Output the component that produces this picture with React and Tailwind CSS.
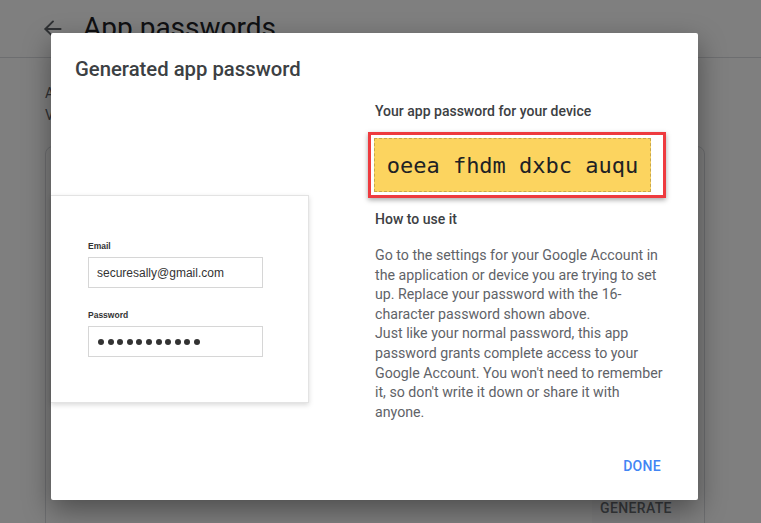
import { ArrowLeft } from 'lucide-react';

const HOW_TO = "Go to the settings for your Google Account in the application or device you are trying to set up. Replace your password with the 16-character password shown above.";
const HOW_TO_2 = "Just like your normal password, this app password grants complete access to your Google Account. You won't need to remember it, so don't write it down or share it with anyone.";

function BackgroundPage() {
  return (
    <div className="w-full h-full bg-white">
      {/* Header */}
      <div className="h-[58px] border-b border-[#dadce0] flex items-start">
        <ArrowLeft className="ml-[40px] mt-[16px] w-[26px] h-[26px] text-[#5f6368]" strokeWidth={1.8} />
        <h1 className="ml-[17px] mt-[10px] text-[28px] leading-[36px] text-[#202124]">App passwords</h1>
      </div>

      <div className="pl-[45px] pt-[24px] text-[14px] leading-[22px] text-[#5f6368]">
        <p>App passwords let you sign in to your Google Account from apps on devices that</p>
        <p>Verification. You'll only need to enter it once.</p>
      </div>

      {/* Card */}
      <div className="ml-[45px] mt-[20px] w-[660px] h-[400px] border border-[#dadce0] rounded-t-lg relative">
        <div className="absolute right-[24px] top-[346px] w-[88px] h-[30px] bg-[#f8f9fa] flex items-center justify-center text-[14px] font-medium tracking-wide text-[#70757a]">
          GENERATE
        </div>
      </div>
    </div>
  );
}

function LoginIllustration() {
  return (
    <div
      className="w-[258px] h-[208px] bg-white border border-[#e3e3e3] border-l-0 shadow-[0_2px_5px_rgba(0,0,0,0.15)] pl-[37px] pt-[44px]"
      style={{ fontFamily: '"Liberation Sans", Arial, sans-serif' }}
    >
      <div className="text-[8.5px] leading-[12px] font-bold text-[#333]">Email</div>
      <div className="mt-[5px] w-[175px] h-[31px] border border-[#d6d6d6] flex items-center pl-[8px] text-[12px] text-[#333]">
        securesally@gmail.com
      </div>
      <div className="mt-[21px] text-[8.5px] leading-[12px] font-bold text-[#333]">Password</div>
      <div className="mt-[5px] w-[175px] h-[31px] border border-[#d6d6d6] flex items-center gap-[3.6px] pl-[9px]">
        {Array.from({ length: 11 }).map((_, i) => (
          <span key={i} className="w-[6px] h-[6px] rounded-full bg-[#333]" />
        ))}
      </div>
    </div>
  );
}

export default function App() {
  return (
    <div
      className="relative w-[761px] h-[523px] overflow-hidden"
      style={{ fontFamily: 'Roboto, "Liberation Sans", Arial, sans-serif' }}
    >
      <BackgroundPage />

      {/* Scrim */}
      <div className="absolute inset-0 bg-black/50" />

      {/* Dialog */}
      <div className="absolute left-[51px] top-[33px] w-[647px] h-[467px] bg-white rounded-[2px] shadow-[0_10px_28px_rgba(0,0,0,0.4)] flex flex-col">
        <h2 className="pl-[24px] pt-[22px] text-[20.3px] leading-[28px] font-medium text-[#3c4043]">
          Generated app password
        </h2>

        <div className="flex mt-[18px]">
          <div className="w-[324px] shrink-0 pt-[94px]">
            <LoginIllustration />
          </div>

          <div className="w-[292px]">
            <div className="text-[14px] leading-[20px] font-medium text-[#3c4043]">
              Your app password for your device
            </div>

            <div className="mt-[11px] -ml-[7px] w-[298px] h-[66px] border-[3px] border-[#ee3b3f] shadow-[0_2px_5px_rgba(0,0,0,0.35)] pt-[3px] pl-[3px]">
              <div
                className="w-[277px] h-[54px] bg-[#fcd45f] border border-dashed border-[#c8a84a] flex items-center justify-center text-[22px] text-[#202124]"
                style={{ fontFamily: '"DejaVu Sans Mono", "Liberation Mono", monospace' }}
              >
                oeea fhdm dxbc auqu
              </div>
            </div>

            <div className="mt-[11px] text-[14px] leading-[20px] font-medium text-[#3c4043]">How to use it</div>

            <div className="mt-[17px] text-[14.2px] leading-[19.6px] text-[#5f6368]">
              <p>{HOW_TO}</p>
              <p>{HOW_TO_2}</p>
            </div>
          </div>
        </div>

        <div className="mt-auto flex justify-end pr-[37px] pb-[23px]">
          <button className="text-[14px] font-medium text-[#4285f4] tracking-[0.3px]">DONE</button>
        </div>
      </div>
    </div>
  );
}
